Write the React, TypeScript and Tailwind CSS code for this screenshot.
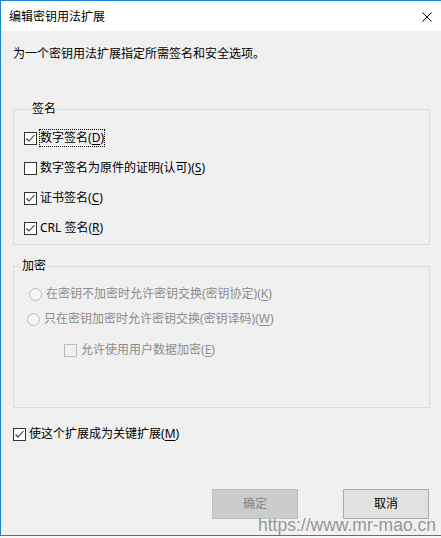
import React from "react";

const font = { fontFamily: '"Noto Sans", "Noto Sans CJK SC", sans-serif' };

function Check({ checked, disabled }: { checked?: boolean; disabled?: boolean }) {
  return (
    <span
      className={
        "w-[13px] h-[13px] shrink-0 border flex items-center justify-center " +
        (disabled ? "border-[#bcbcbc] bg-[#f0f0f0]" : "border-[#333333] bg-white")
      }
    >
      {checked && (
        <svg width="11" height="11" viewBox="0 0 11 11">
          <polyline points="1.5,5.5 4,8 9.5,2" fill="none" stroke="#333333" strokeWidth="1.1" />
        </svg>
      )}
    </span>
  );
}

function Radio() {
  return <span className="w-[13px] h-[13px] shrink-0 rounded-full border border-[#bcbcbc] bg-[#f4f4f4]" />;
}

function Label({ text, k }: { text: string; k: string }) {
  return (
    <span>
      {text}(<span className="underline underline-offset-2">{k}</span>)
    </span>
  );
}

export default function App() {
  return (
    <div className="w-[441px] h-[538px] bg-[#f7f7f7] text-[12px] leading-[16px] text-black" style={font}>
      <div className="relative h-[536px] flex flex-col border-l border-t border-b border-[#1883d7] bg-[#f0f0f0]">
        {/* Title bar */}
        <div className="h-[30px] bg-white flex items-center justify-between pl-[8px] pr-[9px]">
          <span className="mt-[1px]">编辑密钥用法扩展</span>
          <svg width="10" height="10" viewBox="0 0 10 10" className="mt-[1px]">
            <path d="M0.5 0.5 L9.5 9.5 M9.5 0.5 L0.5 9.5" stroke="#000" strokeWidth="1" />
          </svg>
        </div>

        <div className="flex-1 flex flex-col">
          <p className="mt-[15px] pl-[12px]">为一个密钥用法扩展指定所需签名和安全选项。</p>

          {/* 签名 */}
          <fieldset className="mt-[39px] ml-[12px] w-[417px] border border-[#dcdcdc] pl-[10px] pb-[6px]">
            <legend className="ml-[7px] px-[1px]">签名</legend>
            <div className="pt-[11px] flex flex-col gap-[10px]">
              <div className="h-[20px] flex items-center gap-[2px]">
                <Check checked />
                <span className="border border-dotted border-black leading-[16px]">
                  <Label text="数字签名" k="D" />
                </span>
              </div>
              <div className="h-[20px] flex items-center gap-[3px]">
                <Check />
                <Label text="数字签名为原件的证明(认可)" k="S" />
              </div>
              <div className="h-[20px] flex items-center gap-[3px]">
                <Check checked />
                <Label text="证书签名" k="C" />
              </div>
              <div className="h-[20px] flex items-center gap-[3px]">
                <Check checked />
                <Label text="CRL 签名" k="R" />
              </div>
            </div>
          </fieldset>

          {/* 加密 */}
          <fieldset className="mt-[13px] ml-[12px] w-[417px] border border-[#dcdcdc] pb-[47px] text-[#8c8c8c]">
            <legend className="ml-[7px] px-[1px] text-black">加密</legend>
            <div className="pt-[10px] flex flex-col">
              <div className="h-[20px] flex items-center gap-[4px] pl-[15px]">
                <Radio />
                <Label text="在密钥不加密时允许密钥交换(密钥协定)" k="K" />
              </div>
              <div className="mt-[5px] h-[20px] flex items-center gap-[4px] pl-[13px]">
                <Radio />
                <Label text="只在密钥加密时允许密钥交换(密钥译码)" k="W" />
              </div>
              <div className="mt-[11px] h-[20px] flex items-center gap-[4px] pl-[50px]">
                <Check disabled />
                <Label text="允许使用用户数据加密" k="E" />
              </div>
            </div>
          </fieldset>

          <div className="mt-[16px] h-[20px] flex items-center gap-[3px] pl-[12px]">
            <Check checked />
            <Label text="使这个扩展成为关键扩展" k="M" />
          </div>

          <div className="mt-[45px] flex justify-end gap-[45px] pr-[12px]">
            <button className="w-[86px] h-[30px] border border-[#bfbfbf] bg-[#cccccc] text-[#838383]">确定</button>
            <button className="w-[86px] h-[30px] border border-[#adadad] bg-[#e1e1e1] text-black">取消</button>
          </div>
        </div>

        {/* watermark */}
        <span
          className="absolute left-[257px] top-[514px] whitespace-nowrap text-[17.5px] leading-[20px] text-[#8a8a8a]/90"
          style={{ fontFamily: '"Liberation Sans", Arial, sans-serif' }}
        >
          https://www.mr-mao.cn
        </span>
      </div>
    </div>
  );
}
